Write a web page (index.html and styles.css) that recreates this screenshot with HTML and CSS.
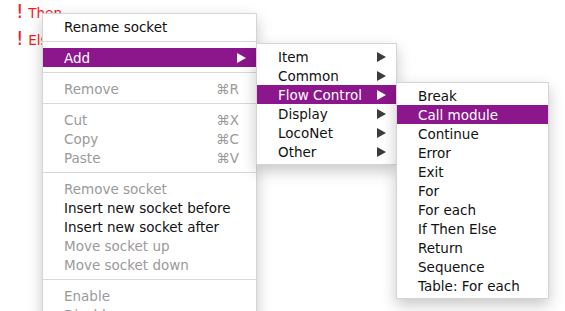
FILE: index.html
```html
<!DOCTYPE html>
<html lang="en">
<head>
    <meta charset="UTF-8">
    <title>Socket menu</title>
    <link rel="stylesheet" href="styles.css">
</head>
<body>
    <div class="editor">
        <div class="socket"><span class="bang">!</span> Then</div>
        <div class="socket"><span class="bang">!</span> Else</div>
    </div>

    <!-- popup menu -->
    <div class="menu main-menu">
        <div class="item">Rename socket</div>
        <div class="sep"></div>
        <div class="item active">Add<span class="arrow"></span></div>
        <div class="sep"></div>
        <div class="item off">Remove<span class="key">⌘R</span></div>
        <div class="sep"></div>
        <div class="item off">Cut<span class="key">⌘X</span></div>
        <div class="item off">Copy<span class="key">⌘C</span></div>
        <div class="item off">Paste<span class="key">⌘V</span></div>
        <div class="sep"></div>
        <div class="item off">Remove socket</div>
        <div class="item">Insert new socket before</div>
        <div class="item">Insert new socket after</div>
        <div class="item off">Move socket up</div>
        <div class="item off">Move socket down</div>
        <div class="sep"></div>
        <div class="item off">Enable</div>
        <div class="item off">Disable</div>
    </div>

    <div class="menu add-menu">
        <div class="item">Item<span class="arrow"></span></div>
        <div class="item">Common<span class="arrow"></span></div>
        <div class="item active">Flow Control<span class="arrow"></span></div>
        <div class="item">Display<span class="arrow"></span></div>
        <div class="item">LocoNet<span class="arrow"></span></div>
        <div class="item">Other<span class="arrow"></span></div>
    </div>

    <div class="menu flow-menu">
        <div class="item">Break</div>
        <div class="item active">Call module</div>
        <div class="item">Continue</div>
        <div class="item">Error</div>
        <div class="item">Exit</div>
        <div class="item">For</div>
        <div class="item">For each</div>
        <div class="item">If Then Else</div>
        <div class="item">Return</div>
        <div class="item">Sequence</div>
        <div class="item">Table: For each</div>
    </div>
</body>
</html>
```
FILE: styles.css
```css
html, body {
    margin: 0;
    height: 100%;
    overflow: hidden;
}
body {
    position: relative;
    background: #fff;
    font-family: "DejaVu Sans", "Lucida Grande", sans-serif;
    font-size: 13.5px;
}
.editor {
    padding: 2px 0 0 16px;
}
.socket {
    color: #f31b1b;
    height: 27px;
    line-height: 18px;
}
.bang {
    font-size: 19px;
    display: inline-block;
    width: 8px;
}
.menu {
    position: absolute;
    background: #fff;
    border: 1px solid #d4d4d4;
    padding: 3px 0;
    box-shadow: 0 6px 14px rgba(0, 0, 0, 0.22);
}
.main-menu {
    left: 42px;
    top: 13px;
    width: 213px;
    padding-bottom: 0;
}
.add-menu {
    left: 256px;
    top: 43px;
    width: 139px;
}
.flow-menu {
    left: 396px;
    top: 82px;
    width: 151px;
}
.item {
    display: flex;
    align-items: center;
    justify-content: space-between;
    height: 19px;
    padding: 0 10px 0 21px;
    color: #111;
    white-space: nowrap;
}
.item.off {
    color: #9a9a9a;
}
.item.active {
    background: #8c168c;
    color: #fff;
}
.key {
    color: #9a9a9a;
    padding-right: 7px;
}
.arrow {
    width: 0;
    height: 0;
    border-left: 9px solid #3c3c3c;
    border-top: 5px solid transparent;
    border-bottom: 5px solid transparent;
}
.active .arrow {
    border-left-color: #fff;
}
.sep {
    height: 1px;
    background: #d9d9d9;
    margin: 5px 0 6px;
}
```
